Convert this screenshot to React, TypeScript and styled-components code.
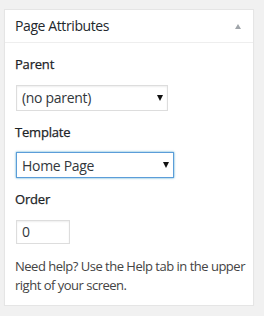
import React from 'react'
import styled, { createGlobalStyle } from 'styled-components'

const GlobalStyle = createGlobalStyle`
  html, body {
    margin: 0;
    padding: 0;
    background: #f1f1f1;
  }
  body {
    font-family: 'Open Sans', 'Noto Sans', sans-serif;
    color: #444;
  }
`;

const Page = styled.div`
  padding: 9px 0 0 4px;
`;

const Postbox = styled.div`
  width: 248px;
  background: #fff;
  border: 1px solid #e5e5e5;
  box-shadow: 0 1px 1px rgba(0, 0, 0, 0.04);
`;

const Header = styled.div`
  display: flex;
  align-items: center;
  justify-content: space-between;
  padding: 6px 10px;
  border-bottom: 1px solid #eee;
`;

const Title = styled.h2`
  margin: 0;
  font-size: 14px;
  line-height: 20px;
  font-weight: 400;
  letter-spacing: -0.4px;
  color: #23282d;
`;

const Toggle = styled.span`
  width: 0;
  height: 0;
  margin-right: 2px;
  border-left: 3.5px solid transparent;
  border-right: 3.5px solid transparent;
  border-bottom: 5px solid #a0a5aa;
`;

const Inside = styled.div`
  padding: 12px 10px 10px;
`;

const Label = styled.p`
  margin: 0 0 10px;
  font-size: 13px;
  line-height: 19.5px;
  font-weight: 400;
  letter-spacing: -0.2px;
  color: #1d2327;
  -webkit-text-stroke: 0.25px #1d2327;
`;

const Field = styled.div`
  margin: 0 0 12px 1px;
`;

const SelectWrap = styled.div<{ $width: number; $focus?: boolean }>`
  position: relative;
  width: ${p => p.$width}px;
  height: 26px;
  box-sizing: border-box;
  border: 1px solid ${p => (p.$focus ? '#5b9dd9' : '#ddd')};
  box-shadow: ${p =>
    p.$focus ? '0 0 2px rgba(30, 140, 190, 0.8)' : 'inset 0 1px 2px rgba(0, 0, 0, 0.07)'};
  background: #fff;
`;

const Select = styled.select`
  appearance: none;
  -webkit-appearance: none;
  width: 100%;
  height: 100%;
  margin: 0;
  border: 0;
  outline: none;
  background: transparent;
  padding: 0 20px 0 5px;
  font-family: 'Open Sans', 'Noto Sans', sans-serif;
  font-size: 14px;
  letter-spacing: -0.3px;
  color: #32373c;
`;

const Arrow = styled.span`
  position: absolute;
  right: 4px;
  top: 9px;
  width: 0;
  height: 0;
  border-left: 3.5px solid transparent;
  border-right: 3.5px solid transparent;
  border-top: 6px solid #111;
  pointer-events: none;
`;

const NumberInput = styled.input`
  box-sizing: border-box;
  width: 54px;
  height: 24px;
  margin: 0;
  padding: 0 5px;
  border: 1px solid #ddd;
  box-shadow: inset 0 1px 2px rgba(0, 0, 0, 0.07);
  font-family: 'Open Sans', 'Noto Sans', sans-serif;
  font-size: 14px;
  color: #32373c;
  outline: none;
`;

const Help = styled.p`
  margin: 13px -4px 0 0;
  font-size: 13px;
  line-height: 19px;
  letter-spacing: -0.5px;
  color: #444;
`;

export default function App() {
  return (
    <Page>
      <GlobalStyle />
      <Postbox>
        <Header>
          <Title>Page Attributes</Title>
          <Toggle />
        </Header>
        <Inside>
          <Label>Parent</Label>
          <Field>
            <SelectWrap $width={152}>
              <Select defaultValue="">
                <option value="">(no parent)</option>
              </Select>
              <Arrow />
            </SelectWrap>
          </Field>
          <Label>Template</Label>
          <Field>
            <SelectWrap $width={158} $focus>
              <Select defaultValue="home">
                <option value="home">Home Page</option>
              </Select>
              <Arrow />
            </SelectWrap>
          </Field>
          <Label>Order</Label>
          <Field>
            <NumberInput type="text" defaultValue="0" />
          </Field>
          <Help>Need help? Use the Help tab in the upper right of your screen.</Help>
        </Inside>
      </Postbox>
    </Page>
  )
}
